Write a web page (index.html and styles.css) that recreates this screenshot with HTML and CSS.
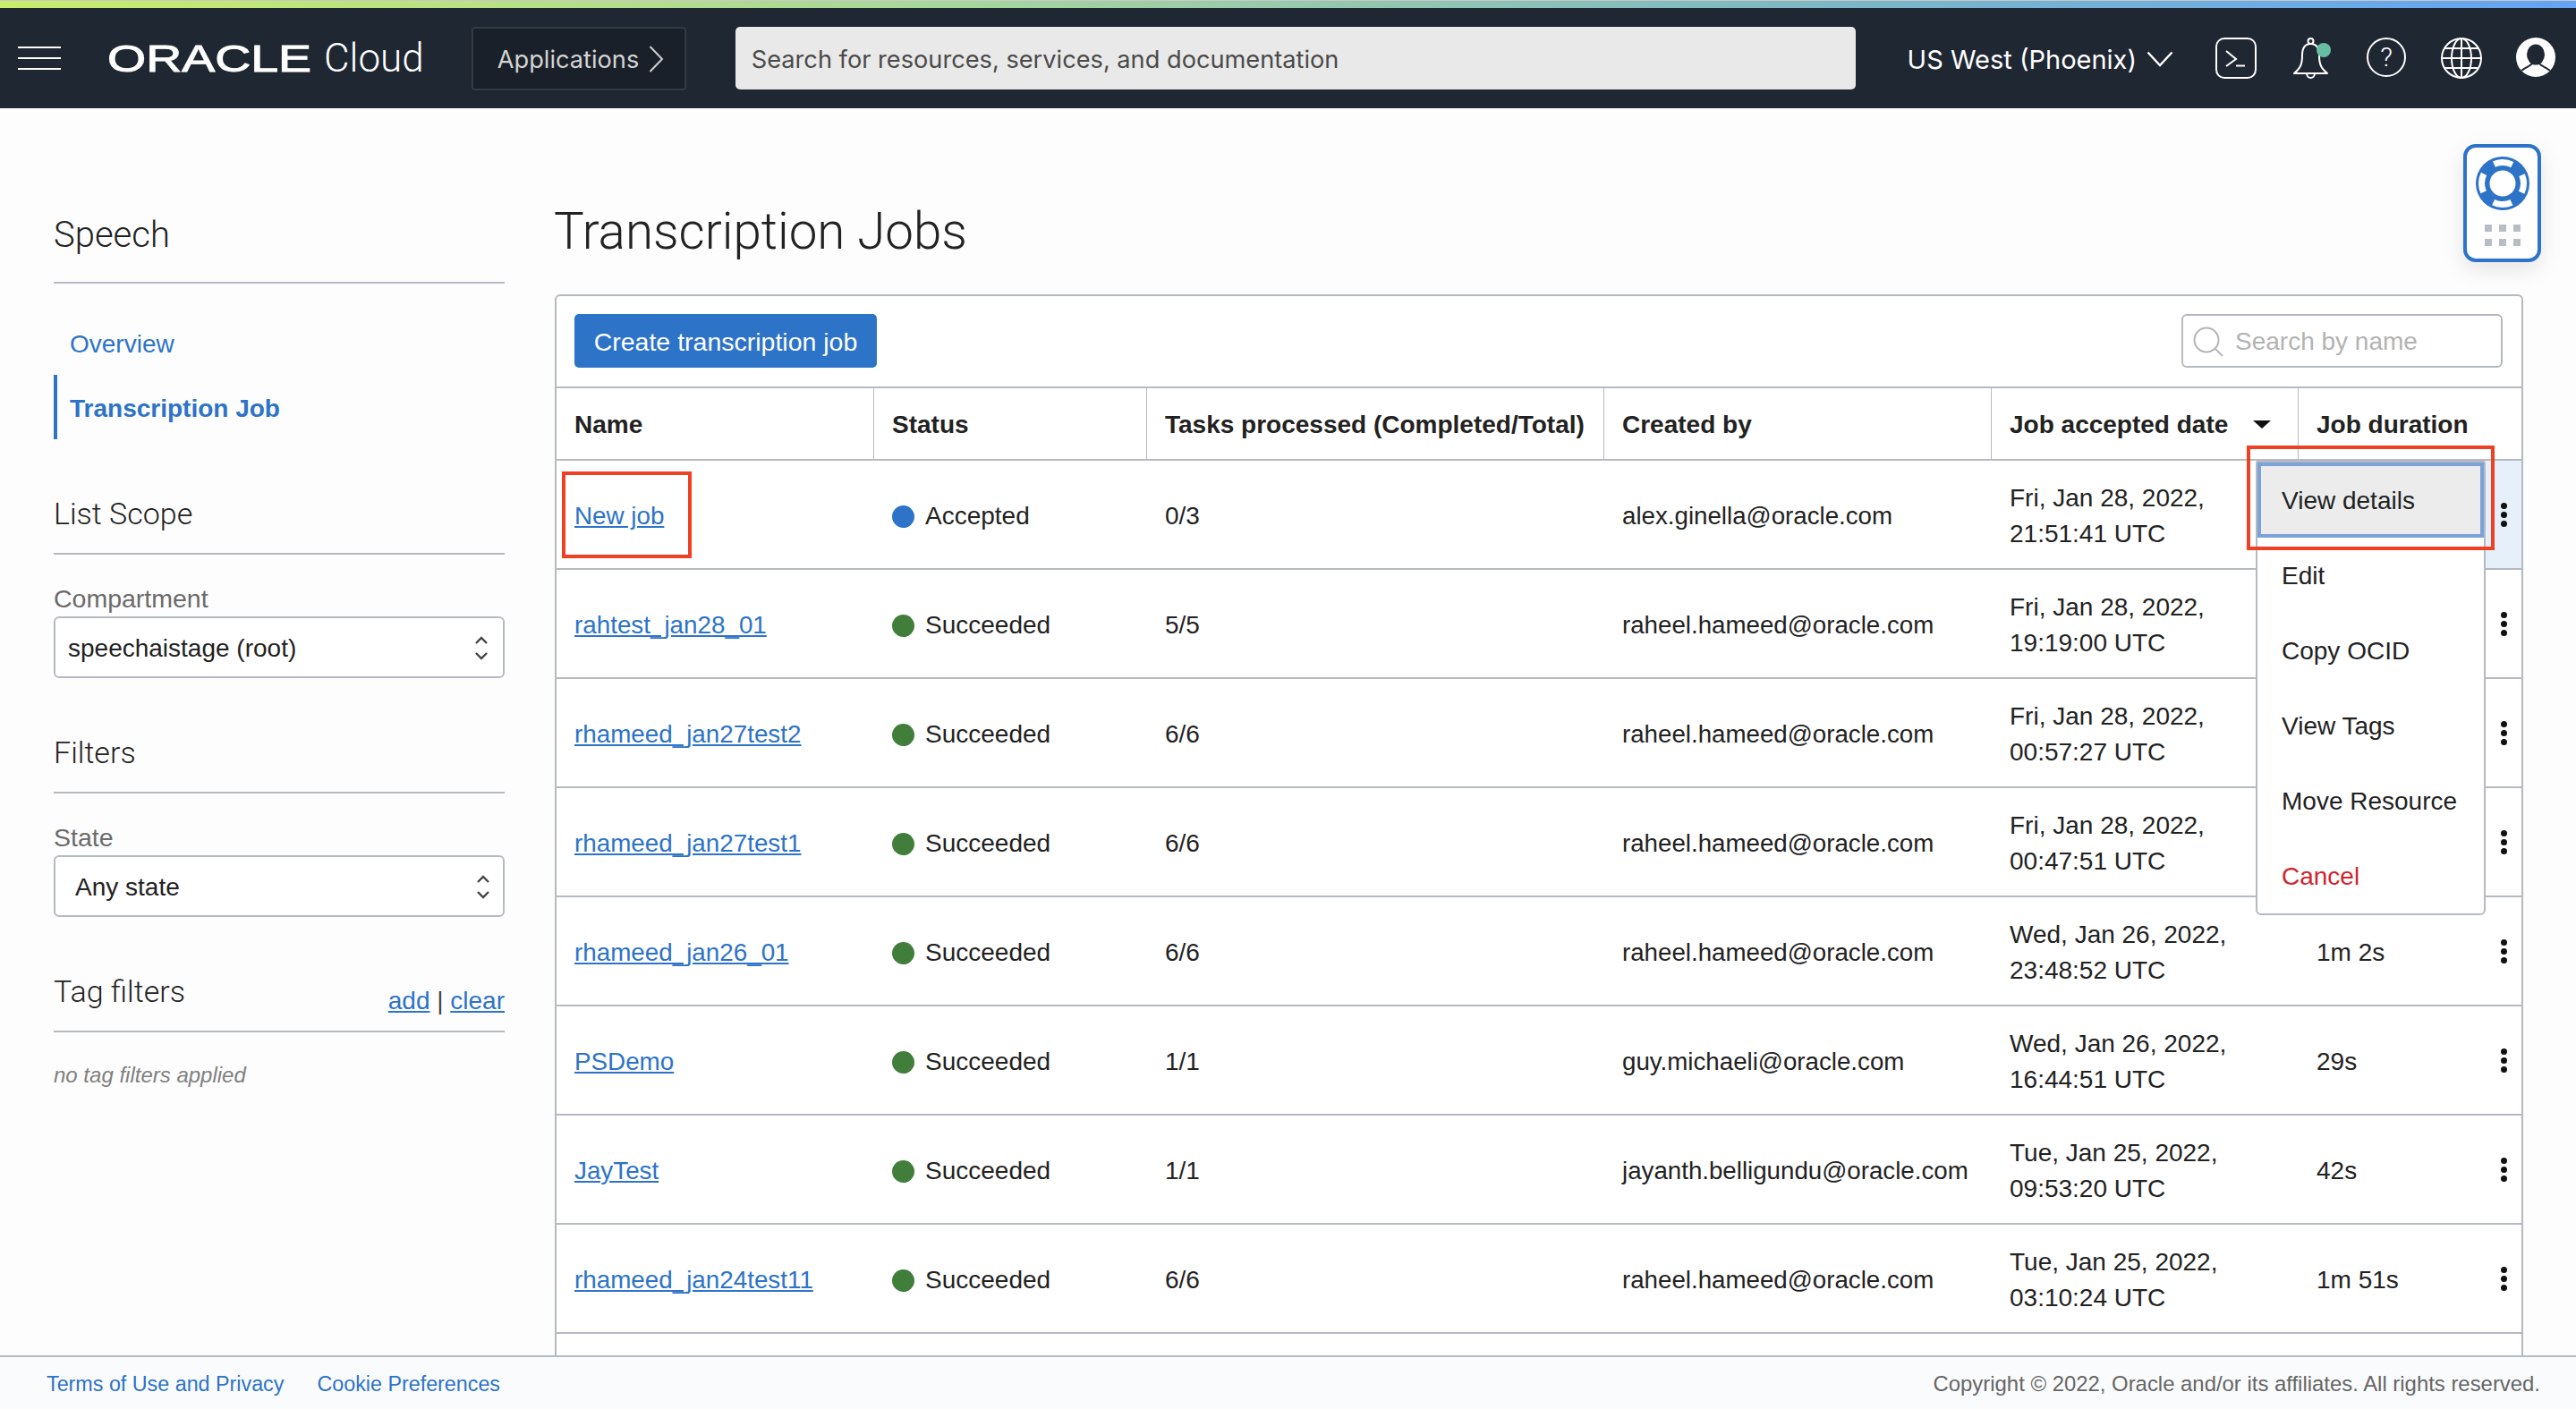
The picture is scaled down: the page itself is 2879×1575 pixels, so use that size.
FILE: index.html
```html
<!DOCTYPE html>
<html lang="en">
<head>
    <meta charset="UTF-8">
    <title>Transcription Jobs</title>
    <link rel="stylesheet" href="styles.css">
</head>
<body>
    <div class="rainbow"></div>

    <!-- Top navigation -->
    <header class="topbar">
        <div class="burger"><span></span><span></span><span></span></div>
        <div class="brand">
            <svg class="brand-mark" width="228" height="32" viewBox="0 0 228 32">
                <text x="0" y="31" textLength="228" lengthAdjust="spacingAndGlyphs" class="brand-text">ORACLE</text>
            </svg>
            <span class="brand-cloud">Cloud</span>
        </div>
        <button class="apps-btn">Applications
            <svg width="17" height="30" viewBox="0 0 17 30"><path d="M1.5 1 L15 15 L1.5 29" fill="none" stroke="#d0d0d0" stroke-width="2"/></svg>
        </button>
        <div class="global-search">Search for resources, services, and documentation</div>
        <div class="topbar-right">
            <div class="region">US West (Phoenix)
                <svg width="30" height="18" viewBox="0 0 30 18"><path d="M1.5 1.5 L15 16 L28.5 1.5" fill="none" stroke="#fff" stroke-width="2.4"/></svg>
            </div>
            <div class="top-icons">
                <svg class="top-icon" viewBox="0 0 46 46"><rect x="1" y="1" width="44" height="44" rx="9" fill="none" stroke="#fff" stroke-width="2"/><path d="M12 15 L23 24 L12 32 M23 31.5 H33" fill="none" stroke="#fff" stroke-width="2"/></svg>
                <svg class="top-icon" viewBox="0 0 46 46"><circle cx="22.5" cy="4" r="3" fill="none" stroke="#fff" stroke-width="2"/><path d="M22.5 7 C15 7 13 13 13 20 C13 30 11 34 4 40 H41 C34 34 32 30 32 20 C32 13 30 7 22.5 7 Z" fill="none" stroke="#fff" stroke-width="2" stroke-linejoin="round"/><path d="M18 40 a4.5 5 0 0 0 9 0" fill="none" stroke="#fff" stroke-width="2"/><circle cx="37" cy="14" r="8" fill="#66bfa3"/></svg>
                <svg class="top-icon" viewBox="0 0 46 46"><circle cx="23" cy="22" r="21" fill="none" stroke="#fff" stroke-width="2"/><text x="23" y="32" text-anchor="middle" class="help-mark">?</text></svg>
                <svg class="top-icon" viewBox="0 0 46 46"><g fill="none" stroke="#fff" stroke-width="2"><circle cx="23" cy="23" r="22"/><ellipse cx="23" cy="23" rx="11" ry="22"/><path d="M23 1 V45 M1 23 H45 M5 12 H41 M5 34 H41"/></g></svg>
                <svg class="top-icon" viewBox="0 0 46 46"><circle cx="22" cy="22" r="22" fill="#fff"/><ellipse cx="22" cy="19" rx="10" ry="11.5" fill="#1f2733"/><path d="M6 37 C11 33 16 32 18 29 H26 C28 32 33 33 38 37" fill="none" stroke="#1f2733" stroke-width="2"/></svg>
            </div>
        </div>
    </header>

    <!-- floating help widget -->
    <div class="help-widget">
        <svg width="60" height="60" viewBox="0 0 60 60">
            <circle cx="30" cy="30" r="30" fill="#2d73c8"/>
            <circle cx="30" cy="30" r="23.5" fill="none" stroke="#fff" stroke-width="7" stroke-dasharray="21 15.9" stroke-dashoffset="10.5"/>
            <circle cx="30" cy="30" r="14.5" fill="#fff"/>
        </svg>
        <div class="help-grip">
            <span></span><span></span><span></span>
            <span></span><span></span><span></span>
        </div>
    </div>

    <div class="layout">
        <!-- Left column -->
        <aside class="sidebar">
            <h2 class="side-title side-title-first">Speech</h2>
            <nav class="side-nav">
                <a class="side-link">Overview</a>
                <a class="side-link active">Transcription Job</a>
            </nav>

            <h2 class="side-title side-group">List Scope</h2>
            <label class="field-label">Compartment</label>
            <div class="fake-select select-compartment">speechaistage (root)
                <svg width="16" height="27" viewBox="0 0 16 27"><path d="M2 8 L8 2 L14 8 M2 19 L8 25 L14 19" fill="none" stroke="#444" stroke-width="2.4"/></svg>
            </div>

            <h2 class="side-title side-group">Filters</h2>
            <label class="field-label">State</label>
            <div class="fake-select select-state">Any state
                <svg width="16" height="27" viewBox="0 0 16 27"><path d="M2 8 L8 2 L14 8 M2 19 L8 25 L14 19" fill="none" stroke="#444" stroke-width="2.4"/></svg>
            </div>

            <div class="side-title side-group tag-head">
                <h2>Tag filters</h2>
                <span class="tag-actions"><a>add</a> <i>|</i> <a>clear</a></span>
            </div>
            <p class="no-tags">no tag filters applied</p>
        </aside>

        <!-- Jobs list -->
        <main class="content">
            <h1>Transcription Jobs</h1>
            <section class="panel">
                <div class="toolbar">
                    <button class="btn-primary">Create transcription job</button>
                    <div class="name-search">
                        <svg width="34" height="34" viewBox="0 0 34 34"><circle cx="15" cy="15" r="13.5" fill="none" stroke="#b5b5b5" stroke-width="2"/><path d="M25 25 L33 33" stroke="#b5b5b5" stroke-width="2"/></svg>
                        Search by name
                    </div>
                </div>
                <table class="jobs">
                    <colgroup>
                        <col class="c-name"><col class="c-status"><col class="c-tasks"><col class="c-user"><col class="c-date"><col class="c-dur"><col class="c-menu">
                    </colgroup>
                    <thead>
                        <tr>
                            <th>Name</th>
                            <th>Status</th>
                            <th>Tasks processed (Completed/Total)</th>
                            <th>Created by</th>
                            <th><span class="sort-head">Job accepted date <b class="sort-arrow"></b></span></th>
                            <th colspan="2">Job duration</th>
                        </tr>
                    </thead>
                    <tbody>
                        <tr>
                            <td class="job-name"><a>New job</a></td>
                            <td><span class="dot dot-blue"></span>Accepted</td>
                            <td>0/3</td>
                            <td class="job-user">alex.ginella@oracle.com</td>
                            <td>Fri, Jan 28, 2022,<br>21:51:41 UTC</td>
                            <td></td>
                            <td class="kebab kebab-open"><i></i><i></i><i></i></td>
                        </tr>
                        <tr>
                            <td class="job-name"><a>rahtest_jan28_01</a></td>
                            <td><span class="dot"></span>Succeeded</td>
                            <td>5/5</td>
                            <td class="job-user">raheel.hameed@oracle.com</td>
                            <td>Fri, Jan 28, 2022,<br>19:19:00 UTC</td>
                            <td></td>
                            <td class="kebab"><i></i><i></i><i></i></td>
                        </tr>
                        <tr>
                            <td class="job-name"><a>rhameed_jan27test2</a></td>
                            <td><span class="dot"></span>Succeeded</td>
                            <td>6/6</td>
                            <td class="job-user">raheel.hameed@oracle.com</td>
                            <td>Fri, Jan 28, 2022,<br>00:57:27 UTC</td>
                            <td></td>
                            <td class="kebab"><i></i><i></i><i></i></td>
                        </tr>
                        <tr>
                            <td class="job-name"><a>rhameed_jan27test1</a></td>
                            <td><span class="dot"></span>Succeeded</td>
                            <td>6/6</td>
                            <td class="job-user">raheel.hameed@oracle.com</td>
                            <td>Fri, Jan 28, 2022,<br>00:47:51 UTC</td>
                            <td></td>
                            <td class="kebab"><i></i><i></i><i></i></td>
                        </tr>
                        <tr>
                            <td class="job-name"><a>rhameed_jan26_01</a></td>
                            <td><span class="dot"></span>Succeeded</td>
                            <td>6/6</td>
                            <td class="job-user">raheel.hameed@oracle.com</td>
                            <td>Wed, Jan 26, 2022,<br>23:48:52 UTC</td>
                            <td>1m 2s</td>
                            <td class="kebab"><i></i><i></i><i></i></td>
                        </tr>
                        <tr>
                            <td class="job-name"><a>PSDemo</a></td>
                            <td><span class="dot"></span>Succeeded</td>
                            <td>1/1</td>
                            <td class="job-user">guy.michaeli@oracle.com</td>
                            <td>Wed, Jan 26, 2022,<br>16:44:51 UTC</td>
                            <td>29s</td>
                            <td class="kebab"><i></i><i></i><i></i></td>
                        </tr>
                        <tr>
                            <td class="job-name"><a>JayTest</a></td>
                            <td><span class="dot"></span>Succeeded</td>
                            <td>1/1</td>
                            <td class="job-user">jayanth.belligundu@oracle.com</td>
                            <td>Tue, Jan 25, 2022,<br>09:53:20 UTC</td>
                            <td>42s</td>
                            <td class="kebab"><i></i><i></i><i></i></td>
                        </tr>
                        <tr>
                            <td class="job-name"><a>rhameed_jan24test11</a></td>
                            <td><span class="dot"></span>Succeeded</td>
                            <td>6/6</td>
                            <td class="job-user">raheel.hameed@oracle.com</td>
                            <td>Tue, Jan 25, 2022,<br>03:10:24 UTC</td>
                            <td>1m 51s</td>
                            <td class="kebab"><i></i><i></i><i></i></td>
                        </tr>
                    </tbody>
                </table>

                <!-- Row actions menu and the red callouts lie over the table -->
                <ul class="row-menu">
                    <li class="focused">View details</li>
                    <li>Edit</li>
                    <li>Copy OCID</li>
                    <li>View Tags</li>
                    <li>Move Resource</li>
                    <li class="danger">Cancel</li>
                </ul>
                <div class="callout callout-name"></div>
                <div class="callout callout-menu"></div>
            </section>
        </main>
    </div>

    <footer class="footer">
        <div class="footer-links"><a>Terms of Use and Privacy</a><a>Cookie Preferences</a></div>
        <span class="copyright">Copyright © 2022, Oracle and/or its affiliates. All rights reserved.</span>
    </footer>
</body>
</html>
```

FILE: styles.css
```css
* {
    box-sizing: border-box;
}

html, body {
    height: 100%;
}

body {
    margin: 0;
    display: flex;
    flex-direction: column;
    overflow: hidden;
    position: relative;
    background: #fdfdfd;
    color: #222;
    font-family: "Liberation Sans", Arial, sans-serif;
    font-size: 28px;
}

/* Top bar */
.rainbow {
    height: 9px;
    flex: none;
    border-top: 1px solid #c8c8c8;
    background: linear-gradient(90deg, #c8ec6a 0%, #a9d89a 35%, #7db8c4 70%, #64a4f5 100%);
}

.topbar {
    height: 112px;
    flex: none;
    display: flex;
    align-items: center;
    padding: 0 21px 0 20px;
    background: #1f2733;
    color: #fff;
}

.burger {
    width: 48px;
    display: flex;
    flex-direction: column;
    gap: 10px;
}

.burger span {
    height: 2px;
    background: #fff;
}

.brand {
    display: flex;
    align-items: flex-end;
    margin-left: 52px;
    gap: 14px;
}

.brand-mark {
    display: block;
    overflow: visible;
}

.brand-text {
    font-family: "Liberation Sans", Arial, sans-serif;
    font-weight: 400;
    font-size: 42px;
    fill: #fff;
    stroke: #fff;
    stroke-width: 1;
}

.brand-cloud {
    font-family: Roboto, sans-serif;
    font-weight: 300;
    font-size: 44px;
    line-height: 32px;
}

.apps-btn {
    width: 240px;
    height: 71px;
    margin-left: 53px;
    display: flex;
    align-items: center;
    gap: 11px;
    padding: 2px 0 0 27px;
    background: #1a2029;
    border: 2px solid #323a45;
    border-radius: 4px;
    color: #d4d4d4;
    font-family: Inter, sans-serif;
    font-size: 27.2px;
}

.global-search {
    width: 1252px;
    height: 70px;
    margin-left: 55px;
    padding: 2px 0 0 18px;
    display: flex;
    align-items: center;
    background: #e9e9e9;
    border-radius: 5px;
    color: #4a4a4a;
    font-family: Inter, sans-serif;
    font-size: 27.2px;
}

.topbar-right {
    margin-left: auto;
    display: flex;
    align-items: center;
    gap: 47px;
}

.region {
    display: flex;
    align-items: center;
    gap: 11px;
    padding-top: 2px;
    font-family: Inter, sans-serif;
    font-size: 29px;
}

.top-icons {
    display: flex;
    gap: 38px;
}

.top-icon {
    width: 46px;
    height: 46px;
    display: block;
    overflow: visible;
}

.help-mark {
    font-family: Roboto, sans-serif;
    font-weight: 300;
    font-size: 30px;
    fill: #fff;
}

/* Help widget */
.help-widget {
    position: absolute;
    top: 161px;
    right: 39px;
    z-index: 5;
    width: 87px;
    height: 132px;
    padding-top: 10px;
    display: flex;
    flex-direction: column;
    align-items: center;
    background: #fff;
    border: 4px solid #2d73c8;
    border-radius: 14px;
    box-shadow: 0 8px 24px rgba(0, 0, 0, 0.1);
}

.help-grip {
    margin-top: 16px;
    display: grid;
    grid-template-columns: repeat(3, 8px);
    gap: 8px;
}

.help-grip span {
    height: 8px;
    background: #b8bcc4;
}

/* Page columns */
.layout {
    flex: 1;
    min-height: 0;
    display: flex;
    padding: 0 59px 0 60px;
}

.sidebar {
    width: 504px;
    flex: none;
    padding-top: 119px;
}

.side-title {
    margin: 0;
    font-family: Roboto, sans-serif;
    font-weight: 300;
    font-size: 34px;
    line-height: 44px;
    color: #222;
    padding-bottom: 22px;
    border-bottom: 2px solid #b5b9c1;
}

.side-title-first {
    font-size: 40px;
    padding-top: 1px;
    padding-bottom: 30px;
}

.side-group {
    margin-top: 61px;
}

.side-nav {
    margin-top: 30px;
    display: flex;
    flex-direction: column;
}

.side-link {
    height: 72px;
    display: flex;
    align-items: center;
    padding: 3px 0 0 18px;
    color: #2d73c8;
}

.side-link.active {
    font-weight: bold;
    padding-left: 14px;
    border-left: 4px solid #2d73c8;
}

.field-label {
    display: block;
    margin-top: 33px;
    line-height: 32px;
    font-size: 28.5px;
    color: #6b6b6b;
}

.fake-select {
    height: 69px;
    margin-top: 4px;
    display: flex;
    align-items: center;
    justify-content: space-between;
    padding-top: 2px;
    background: #fff;
    border: 2px solid #b5b9c1;
    border-radius: 6px;
}

.select-compartment {
    padding-right: 16px;
    padding-left: 14px;
}

.select-state {
    padding-right: 14px;
    padding-left: 22px;
}

.tag-head {
    display: flex;
    justify-content: space-between;
    align-items: flex-end;
}

.tag-head h2 {
    margin: 0;
    font: inherit;
}

.tag-actions {
    font-family: "Liberation Sans", Arial, sans-serif;
    font-weight: 400;
    font-size: 28px;
    line-height: 34px;
    margin-bottom: -6px;
}

.tag-actions a {
    color: #2d73c8;
    text-decoration: underline;
}

.tag-actions i {
    font-style: normal;
    color: #444;
}

.no-tags {
    margin: 32px 0 0;
    font-size: 24px;
    line-height: 32px;
    font-style: italic;
    color: #808080;
}

/* Main column */
.content {
    flex: 1;
    min-width: 0;
    margin-left: 56px;
    display: flex;
    flex-direction: column;
}

.content h1 {
    margin: 103px 0 35px -1px;
    font-family: Roboto, sans-serif;
    font-weight: 300;
    font-size: 56.5px;
    line-height: 70px;
    color: #222;
}

.panel {
    flex: 1;
    min-height: 0;
    position: relative;
    overflow: hidden;
    background: #fff;
    border: 2px solid #b5b9c1;
    border-bottom: 0;
    border-radius: 6px 6px 0 0;
}

.toolbar {
    height: 103px;
    display: flex;
    justify-content: space-between;
    align-items: flex-start;
    padding: 20px 21px 0 20px;
    border-bottom: 2px solid #b5b9c1;
}

.btn-primary {
    width: 338px;
    height: 60px;
    padding: 3px 0 0;
    background: #2d73c8;
    color: #fff;
    border: 0;
    border-radius: 5px;
    font-family: "Liberation Sans", Arial, sans-serif;
    font-size: 28.5px;
}

.name-search {
    width: 359px;
    height: 60px;
    display: flex;
    align-items: center;
    gap: 13px;
    padding: 2px 0 0 11px;
    border: 2px solid #b5b9c1;
    border-radius: 6px;
    color: #b3b3b3;
}

/* Jobs table */
.jobs {
    width: 2196px;
    table-layout: fixed;
    border-collapse: separate;
    border-spacing: 0;
}

.c-name { width: 355px; }
.c-status { width: 305px; }
.c-tasks { width: 511px; }
.c-user { width: 433px; }
.c-date { width: 343px; }
.c-dur { width: 209px; }
.c-menu { width: 40px; }

.jobs th {
    height: 81px;
    padding: 2px 0 0 20px;
    text-align: left;
    font-weight: bold;
    white-space: nowrap;
    border-right: 1px solid #b5b9c1;
    border-bottom: 2px solid #b5b9c1;
}

.jobs th:last-child {
    border-right: 0;
}

.jobs td {
    height: 122px;
    padding: 3px 0 0 20px;
    line-height: 40px;
    white-space: nowrap;
    border-bottom: 2px solid #b5b9c1;
}

.jobs td.job-name {
    font-size: 27.8px;
}

.jobs td.job-user {
    font-size: 27.7px;
}

.jobs td a {
    color: #2d73c8;
    text-decoration: underline;
}

.sort-head {
    display: flex;
    align-items: center;
    gap: 28px;
}

.sort-head .sort-arrow {
    width: 0;
    height: 0;
    border-left: 10px solid transparent;
    border-right: 10px solid transparent;
    border-top: 9px solid #111;
}

.dot {
    display: inline-block;
    width: 25px;
    height: 25px;
    margin-right: 12px;
    vertical-align: -4px;
    border-radius: 50%;
    background: #417e3b;
}

.dot-blue {
    background: #2d73c8;
}

.jobs td.kebab {
    padding: 0;
    text-align: center;
    font-size: 0;
}

.kebab i {
    display: block;
    width: 7px;
    height: 7px;
    margin: 3px auto;
    border-radius: 50%;
    background: #111;
}

.jobs td.kebab-open {
    background: #e6f0fa;
}

/* Row action menu */
.row-menu {
    position: absolute;
    top: 184px;
    left: 1899px;
    width: 257px;
    margin: 0;
    padding: 0;
    list-style: none;
    background: #fff;
    border: 2px solid #b5b9c1;
    border-radius: 2px 2px 6px 6px;
}

.row-menu li {
    height: 84px;
    display: flex;
    align-items: center;
    padding: 2px 0 0 27px;
}

.row-menu li.focused {
    height: 84px;
    padding-left: 23px;
    background: #ececec;
    border: 4px solid #7ba3d9;
}

.row-menu li.danger {
    color: #d1252d;
}

.callout {
    position: absolute;
    border: 4px solid #ee4123;
}

.callout-name {
    top: 196px;
    left: 6px;
    width: 145px;
    height: 97px;
}

.callout-menu {
    top: 167px;
    left: 1889px;
    width: 277px;
    height: 117px;
}

/* Footer */
.footer {
    height: 60px;
    flex: none;
    display: flex;
    justify-content: space-between;
    align-items: center;
    padding: 2px 40px 0 52px;
    background: #fafbfc;
    border-top: 2px solid #b5b9c1;
    font-size: 23.9px;
}

.footer-links {
    display: flex;
    gap: 37px;
    font-size: 23.3px;
    color: #2d73c8;
}

.copyright {
    color: #666;
}
```
